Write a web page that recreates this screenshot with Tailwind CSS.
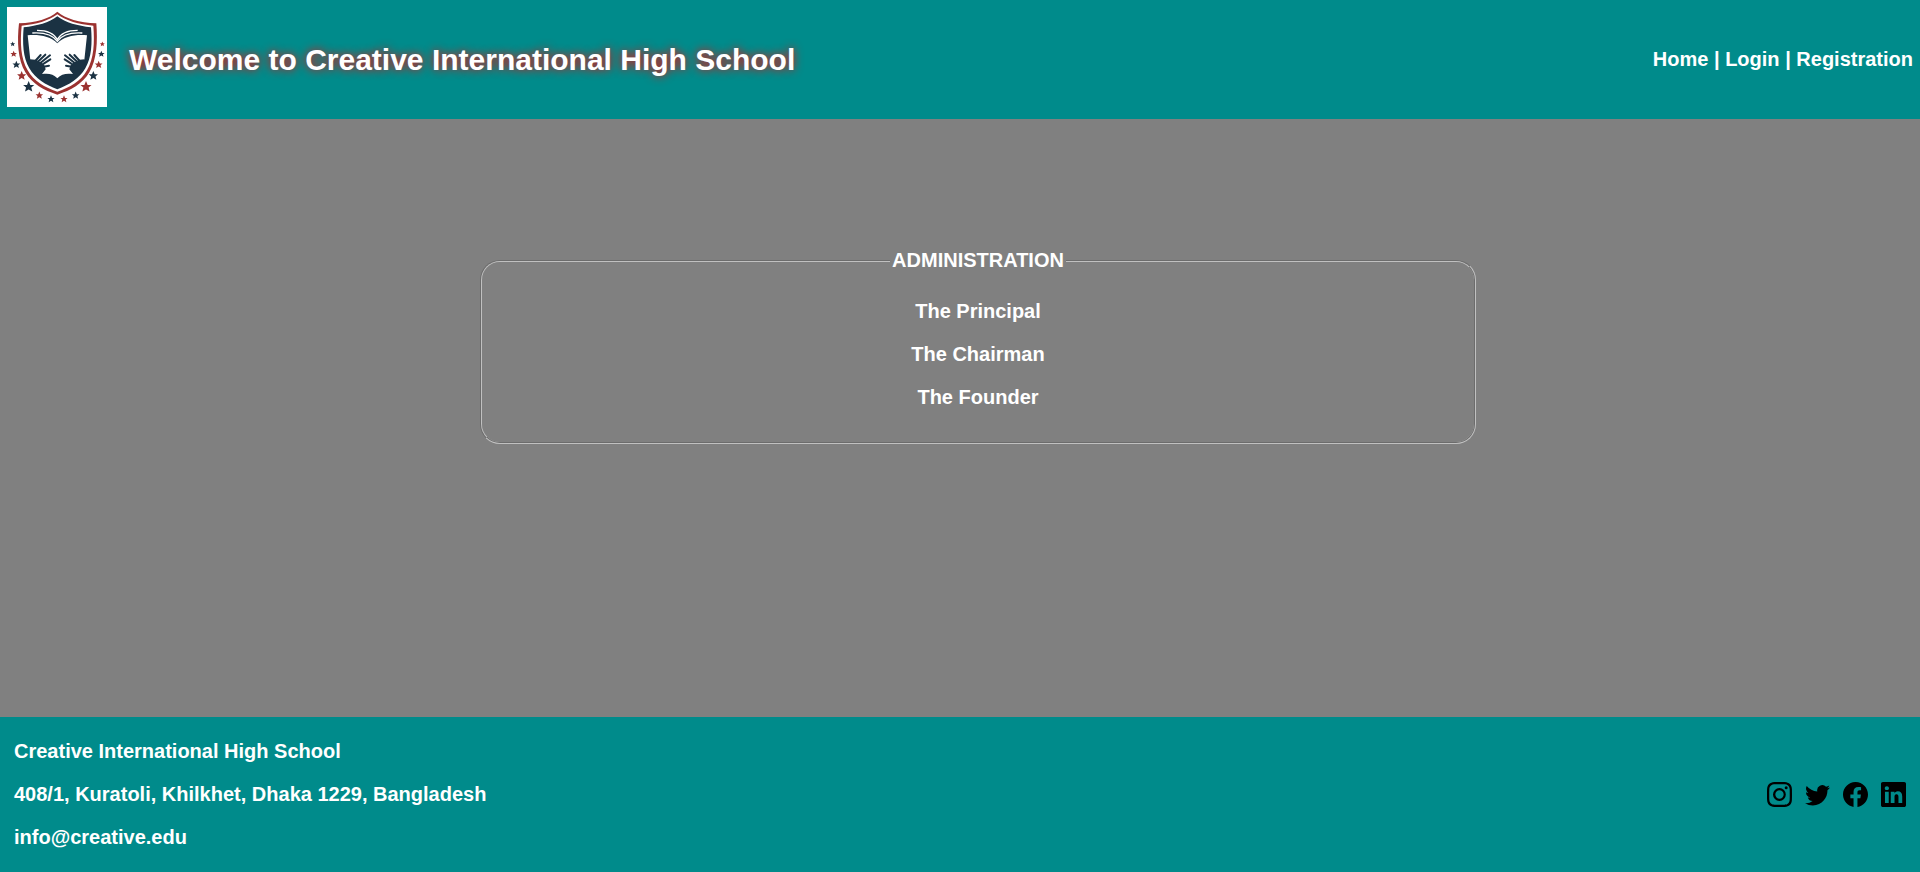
<!DOCTYPE html>
<html lang="en">
<head>
<meta charset="utf-8">
<meta name="viewport" content="width=device-width, initial-scale=1">
<title>Creative International High School</title>
<script src="https://cdn.jsdelivr.net/npm/@tailwindcss/browser@4"></script>
</head>
<body class="flex min-h-screen flex-col bg-[#808080] font-['Liberation_Sans',Arial,sans-serif] text-[20px] leading-[23px] font-bold text-white">

<header class="flex items-center justify-between bg-[#008b8b] px-[7px]">
  <div class="flex items-center gap-[22px]">
    <svg class="mt-[7px] mb-3 size-[100px] shrink-0" viewBox="21 21 300 300" role="img" aria-label="School logo">
      <rect x="21" y="21" width="300" height="300" fill="#fff"/>
      <!-- shield -->
      <path d="M172 35C148 56 108 68 57 70C51 125 53 178 76 217C97 252 131 271 172 284C213 271 247 252 268 217C291 178 293 125 289 70C238 68 197 56 172 35Z" fill="#9b3230"/>
      <path d="M172 43C147 62 108 74 65 77C60 128 62 175 83 211C102 244 134 263 172 275C210 263 242 244 261 211C282 175 284 128 280 77C237 74 197 62 172 43Z" fill="#fff"/>
      <path d="M172 49C147 68 112 78 71 82C67 130 69 172 88 205C106 236 137 255 172 268C207 255 238 236 256 205C275 172 277 130 273 82C233 78 197 68 172 49Z" fill="#1b3243"/>
      <!-- open book -->
      <path d="M83 106C118 103 152 109 172 130C192 109 226 103 261 106L253 180L236 180L212 196L208 208L219 222C199 219 184 222 172 235C160 222 146 219 126 222L137 208L133 196L109 180L91 180Z" fill="#fff"/>
      <g fill="none" stroke="#fff" stroke-width="4">
        <path d="M97 99C128 97 157 103 172 124C187 103 216 97 247 99"/>
        <path d="M111 91C138 91 162 99 172 119C182 99 206 91 233 91"/>
      </g>
      <!-- hands -->
      <g fill="none" stroke="#1b3243" stroke-linecap="round" stroke-width="6">
        <path d="M103 186L122 165M112 187L136 164M120 190L150 166M123 196L151 178M122 202L147 197"/>
        <path d="M242 186L223 165M233 187L209 164M225 190L195 166M222 196L194 178M223 202L198 197"/>
      </g>
      <path d="M90 178L106 179L126 190L132 204L120 212L91 203ZM254 178L239 179L219 190L213 204L225 212L254 203Z" fill="#1b3243"/>
      <!-- ring of stars -->
      <defs><path id="star" d="M0-10L2.9-3L9.8-3L4.6 1.6L6.4 8.6L0 4.8L-6.4 8.6L-4.6 1.6L-9.8-3L-2.9-3Z"/></defs>
      <g fill="#1b3243">
        <use href="#star" transform="translate(38 132) scale(.75)"/>
        <use href="#star" transform="translate(49 194) scale(1.2)"/>
        <use href="#star" transform="translate(86 260) scale(1.7)"/>
        <use href="#star" transform="translate(153 297) scale(1.1)"/>
        <use href="#star" transform="translate(227 286) scale(1.15)"/>
        <use href="#star" transform="translate(280 227) scale(1.4)"/>
        <use href="#star" transform="translate(304 162)"/>
      </g>
      <g fill="#9b3230">
        <use href="#star" transform="translate(307 132) scale(.75)"/>
        <use href="#star" transform="translate(41 162)"/>
        <use href="#star" transform="translate(65 227) scale(1.4)"/>
        <use href="#star" transform="translate(118 286) scale(1.15)"/>
        <use href="#star" transform="translate(192 297) scale(1.1)"/>
        <use href="#star" transform="translate(258 260) scale(1.7)"/>
        <use href="#star" transform="translate(296 194) scale(1.2)"/>
      </g>
    </svg>
    <h1 class="text-[30px] leading-[34px] [text-shadow:0_0_10px_#ff0000]">Welcome to Creative International High School</h1>
  </div>
  <nav class="whitespace-nowrap" aria-label="Main"><a href="#home">Home</a> | <a href="#login">Login</a> | <a href="#registration">Registration</a></nav>
</header>

<main class="flex-1 pt-[130px] pb-12">
  <fieldset class="ml-[25%] box-content w-1/2 rounded-[20px] border-2 border-[#c0c0c0] px-4 pt-[28px] pb-[33px] text-center [border-style:groove]">
    <legend class="mx-auto px-[2px]">ADMINISTRATION</legend>
    <ul class="flex flex-col items-center gap-5">
      <li><a href="#principal">The Principal</a></li>
      <li><a href="#chairman">The Chairman</a></li>
      <li><a href="#founder">The Founder</a></li>
    </ul>
  </fieldset>
</main>

<footer class="flex items-center justify-between bg-[#008b8b] px-[14px] py-[23px]">
  <address class="flex flex-col gap-5 not-italic">
    <p>Creative International High School</p>
    <p>408/1, Kuratoli, Khilkhet, Dhaka 1229, Bangladesh</p>
    <p>info@creative.edu</p>
  </address>
  <div class="flex gap-[13px] text-black">
    <a href="#instagram" aria-label="Instagram"><svg class="size-[25px]" viewBox="0 0 16 16" fill="currentColor"><path d="M8 0C5.829 0 5.556.01 4.703.048 3.85.088 3.269.222 2.76.42a3.9 3.9 0 0 0-1.417.923A3.9 3.9 0 0 0 .42 2.76C.222 3.268.087 3.85.048 4.7.01 5.555 0 5.827 0 8.001c0 2.172.01 2.444.048 3.297.04.852.174 1.433.372 1.942.205.526.478.972.923 1.417.444.445.89.719 1.416.923.51.198 1.09.333 1.942.372C5.555 15.99 5.827 16 8 16s2.444-.01 3.298-.048c.851-.04 1.434-.174 1.943-.372a3.9 3.9 0 0 0 1.416-.923c.445-.445.718-.891.923-1.417.197-.509.332-1.09.372-1.942C15.99 10.445 16 10.173 16 8s-.01-2.445-.048-3.299c-.04-.851-.175-1.433-.372-1.941a3.9 3.9 0 0 0-.923-1.417A3.9 3.9 0 0 0 13.24.42c-.51-.198-1.092-.333-1.943-.372C10.443.01 10.172 0 7.998 0zm-.717 1.442h.718c2.136 0 2.389.007 3.232.046.78.035 1.204.166 1.486.275.373.145.64.319.92.599s.453.546.598.92c.11.281.24.705.275 1.485.039.843.047 1.096.047 3.231s-.008 2.389-.047 3.232c-.035.78-.166 1.203-.275 1.485a2.5 2.5 0 0 1-.599.919c-.28.28-.546.453-.92.598-.28.11-.704.24-1.485.276-.843.038-1.096.047-3.232.047s-2.39-.009-3.233-.047c-.78-.036-1.203-.166-1.485-.276a2.5 2.5 0 0 1-.92-.598 2.5 2.5 0 0 1-.6-.92c-.109-.281-.24-.705-.275-1.485-.038-.843-.046-1.096-.046-3.233s.008-2.388.046-3.231c.036-.78.166-1.204.276-1.486.145-.373.319-.64.599-.92s.546-.453.92-.598c.282-.11.705-.24 1.485-.276.738-.034 1.024-.044 2.515-.045zm4.988 1.328a.96.96 0 1 0 0 1.92.96.96 0 0 0 0-1.92m-4.27 1.122a4.109 4.109 0 1 0 0 8.217 4.109 4.109 0 0 0 0-8.217m0 1.441a2.667 2.667 0 1 1 0 5.334 2.667 2.667 0 0 1 0-5.334"/></svg></a>
    <a href="#twitter" aria-label="Twitter"><svg class="size-[25px]" viewBox="0 0 16 16" fill="currentColor"><path d="M5.026 15c6.038 0 9.341-5.003 9.341-9.334q.002-.211-.006-.422A6.7 6.7 0 0 0 16 3.542a6.7 6.7 0 0 1-1.889.518 3.3 3.3 0 0 0 1.447-1.817 6.5 6.5 0 0 1-2.087.793A3.286 3.286 0 0 0 7.875 6.03a9.32 9.32 0 0 1-6.767-3.429 3.29 3.29 0 0 0 1.018 4.382A3.3 3.3 0 0 1 .64 6.575v.045a3.29 3.29 0 0 0 2.632 3.218 3.2 3.2 0 0 1-.865.115 3 3 0 0 1-.614-.057 3.28 3.28 0 0 0 3.067 2.277A6.6 6.6 0 0 1 .78 13.58a6 6 0 0 1-.78-.045A9.34 9.34 0 0 0 5.026 15"/></svg></a>
    <a href="#facebook" aria-label="Facebook"><svg class="size-[25px]" viewBox="0 0 16 16" fill="currentColor"><path d="M16 8.049c0-4.446-3.582-8.05-8-8.05C3.58 0-.002 3.603-.002 8.05c0 4.017 2.926 7.347 6.75 7.951v-5.625h-2.03V8.05H6.75V6.275c0-2.017 1.195-3.131 3.022-3.131.876 0 1.791.157 1.791.157v1.98h-1.009c-.993 0-1.303.621-1.303 1.258v1.51h2.218l-.354 2.326H9.25V16c3.824-.604 6.75-3.934 6.75-7.951"/></svg></a>
    <a href="#linkedin" aria-label="LinkedIn"><svg class="size-[25px]" viewBox="0 0 16 16" fill="currentColor"><path d="M0 1.146C0 .513.526 0 1.175 0h13.65C15.474 0 16 .513 16 1.146v13.708c0 .633-.526 1.146-1.175 1.146H1.175C.526 16 0 15.487 0 14.854zm4.943 12.248V6.169H2.542v7.225zm-1.2-8.212c.837 0 1.358-.554 1.358-1.248-.015-.709-.52-1.262-1.342-1.262S2.4 3.226 2.4 3.934c0 .694.521 1.248 1.327 1.248zm4.908 8.212V9.359c0-.216.016-.432.08-.586.173-.431.568-.878 1.232-.878.869 0 1.216.662 1.216 1.634v3.865h2.401V9.25c0-2.22-1.184-3.252-2.764-3.252-1.274 0-1.845.7-2.165 1.193v.025h-.016l.016-.025V6.169h-2.4c.03.678 0 7.225 0 7.225z"/></svg></a>
  </div>
</footer>
</body>
</html>
